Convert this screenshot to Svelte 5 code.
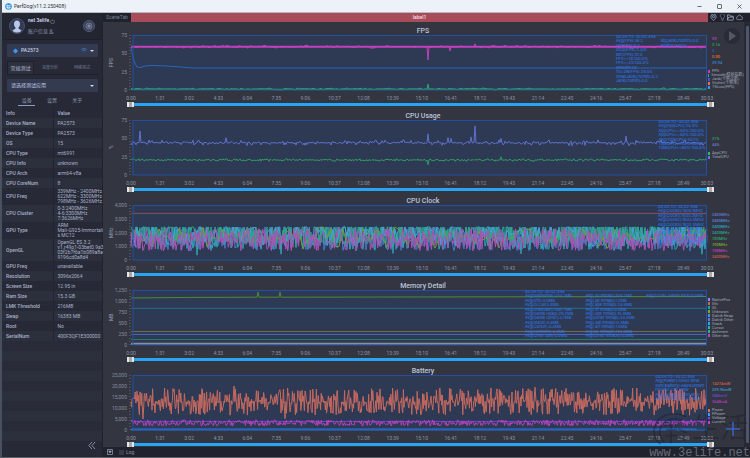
<script>
  let seed = 11;
  const rand = () => {
    seed = (seed * 16807) % 2147483647;
    return seed / 2147483647;
  };

  const W = 576;
  const H = 55;

  // base value with random noise; spikes are [x, value] pairs
  function noise(max, base, amp, { step = 1, spikes = [], pull = 1, cap = max } = {}) {
    let points = [];
    for (let x = 0; x <= W; x += step) {
      const r = rand() * 2 - 1;
      const v = base + Math.sign(r) * Math.pow(Math.abs(r), pull) * amp;
      points.push([x, Math.min(v, cap)]);
    }
    for (const [x, v] of spikes) {
      points = points.filter((p) => Math.abs(p[0] - x) > 1);
      points.push([x - 1, base], [x, v], [x + 1, base]);
    }
    points.sort((a, b) => a[0] - b[0]);
    return points.map(([x, v]) => `${x},${(H - (v / max) * H).toFixed(1)}`).join(' ');
  }

  const flat = (max, v) => `0,${(H - (v / max) * H).toFixed(1)} ${W},${(H - (v / max) * H).toFixed(1)}`;

  const span = '00:06:112-30:02:468';
  const times = [];
  for (let s = 0; s <= 1729; s += 91) {
    times.push(Math.floor(s / 60) + ':' + String(s % 60).padStart(2, '0'));
  }
  times.push('30:03');

  const charts = [
    {
      title: 'FPS',
      unit: 'FPS',
      ticks: ['75', '50', '25', '0'],
      lines: [
        { color: '#2867bd', width: 1, points: '0,13 3,26 6,32 10,32.5 14,31 20,30.4 36,31 50,32 62,33 576,33' },
        { color: '#c23fbd', width: 2, points: flat(75, 59) },
        { color: '#c23fbd', width: 1, points: noise(75, 59, 2, { step: 2, pull: 3, spikes: [[297, 41], [319, 53], [344, 63]] }) },
        { color: '#2fa568', width: 1, points: flat(75, 1) },
        { color: '#2fa568', width: 1, points: noise(75, 1.4, 1.6, { step: 2, pull: 3, spikes: [[297, 8]] }) }
      ],
      stats: [
        {
          left: 84.2,
          rows: [span, 'Avg(FPS):59.2', 'Var(FPS):0.3', 'Drop(FPS):2.0/h', 'Min(FPS):41.0', 'FPS>=18:100.0%', 'FPS>=25:100.0%', 'Smooth:1.8', '1%Low(FPS):29.94', 'SmallJank(/10min):0.3', 'Jank(/10min):0.0']
        },
        { left: 92, rows: ['', 'BigJank(/10min):0.0', 'Stutter:0.00%'] }
      ],
      values: [['59', '#b83fc0'], ['2.16', '#2fa568'], ['0', '#4b4fe0'], ['0.00', '#e8702c'], ['29.94', '#2f86d8']],
      legend: [['FPS', '#c23fbd'], ['Smooth(稳帧指数)', '#35b46c'], ['Jank(卡顿次数)', '#4b4fe0'], ['Stutter(卡顿率)', '#f0702c'], ['1%Low(FPS)', '#35a0f0']]
    },
    {
      title: 'CPU Usage',
      unit: '%',
      ticks: ['75', '50', '25', '0'],
      lines: [
        { color: '#5f70cc', width: 1, points: noise(75, 44, 4, { pull: 3, spikes: [[9, 60], [95, 51], [297, 56], [317, 51], [320, 50], [340, 52], [344, 67], [370, 50], [495, 53]] }) },
        { color: '#2f9a68', width: 1, points: noise(75, 20.5, 1.8, { pull: 2, spikes: [[297, 14], [370, 25]] }) }
      ],
      stats: [
        { left: 91.6, rows: [span, 'Avg(AppCPU):20.4%', 'AppCPU<=60%:100.0%', 'AppCPU<=80%:100.0%', 'Avg(TotalCPU):44.1%', 'TotalCPU<=60%:99.9%', 'TotalCPU<=80%:100.0%'] }
      ],
      values: [['21%', '#2fa568'], ['44%', '#6876d6']],
      legend: [['AppCPU', '#35b46c'], ['TotalCPU', '#6876e6']]
    },
    {
      title: 'CPU Clock',
      unit: 'MHz',
      ticks: ['4,000', '3,000', '2,000', '1,000', '0'],
      lines: [
        { color: '#8a4f60', width: 1, points: flat(4000, 3390) },
        { color: '#4b78cf', width: 1, points: noise(4000, 1600, 950, { cap: 2400 }) },
        { color: '#2fa5b0', width: 1, points: noise(4000, 1700, 950, { pull: 0.8, cap: 2400, spikes: [[66, 350], [150, 420], [262, 480], [390, 450], [571, 420]] }) },
        { color: '#2fa58a', width: 1, points: noise(4000, 1900, 700, { step: 0.8, pull: 0.6, cap: 2400 }) },
        { color: '#7a9c30', width: 1, points: noise(4000, 1600, 800, { step: 4, pull: 2 }) },
        { color: '#4b9fd8', width: 1, points: noise(4000, 1800, 800, { step: 2, cap: 2400 }) },
        { color: '#ac52b4', width: 1, points: noise(4000, 1480, 820, { step: 0.9 }) }
      ],
      stats: [
        { left: 91.5, rows: [span, 'Avg(Clock0):1936.1MHz', 'Avg(Clock1):1935.2MHz', 'Avg(Clock2):1933.4MHz', 'Avg(Clock3):1932.4MHz', 'Avg(Clock4):1286.5MHz', 'Avg(Clock5):1286.4MHz', 'Avg(Clock6):1286.1MHz', 'Avg(Clock7):3399.8MHz'] }
      ],
      values: [['2400MHz', '#6876d6'], ['2400MHz', '#4b8ce0'], ['2400MHz', '#2fa5c8'], ['2400MHz', '#2fa58a'], ['700MHz', '#2fa568'], ['700MHz', '#7ab020'], ['700MHz', '#c23fbd'], ['3400MHz', '#c9594f']],
      legend: []
    },
    {
      title: 'Memory Detail',
      unit: 'MB',
      ticks: ['1,250', '1,000', '750', '500', '250', '0'],
      lines: [
        { color: '#4c8a35', width: 1, points: '0,8 60,7.4 126,7.2 127,2 128,7.2 148,7.2 149,2 150,7.2 576,6.5' },
        { color: '#1f7290', width: 1, points: flat(1250, 835) },
        { color: '#7a6744', width: 1, points: flat(1250, 306) },
        { color: '#4f66b8', width: 1, points: flat(1250, 240) },
        { color: '#2b7a64', width: 1, points: flat(1250, 125) },
        { color: '#8790a0', width: 2, points: flat(1250, 30) }
      ],
      stats: [
        {
          left: 68.4,
          rows: [span, 'Avg(NativePss):240.7MB', 'Avg(Gfx):0.0MB', 'Avg(GL):843.4MB', 'Avg(Unknown):1097.7MB', 'Avg(Dalvik Heap):29.2MB', 'Avg(Dalvik Other):3.7MB', 'Avg(Stack):6.8MB', 'Avg(Cursor):0.0MB', 'Avg(Ashmem):0.0MB', 'Avg(Other dev):0.0MB']
        },
        {
          left: 78.9,
          rows: ['', 'Avg(.so mmap):304.7MB', 'Avg(.jar mmap):1.2MB', 'Avg(.apk mmap):28.9MB', 'Avg(.ttf mmap):0.0MB', 'Avg(.dex mmap):15.0MB', 'Avg(Other mmap):34.2MB', 'Avg(.oat mmap):0.4MB', 'Avg(.art mmap):1.6MB', 'Avg(GL mtrack):123.0MB', 'Avg(Other mtrack):0.0MB']
        },
        { left: 89.4, rows: ['', 'Avg(TOTAL SWAP PSS):0.0MB'] }
      ],
      values: [],
      legend: [['NativePss', '#8d8ff0'], ['Gfx', '#d8604f'], ['GL', '#16a5a0'], ['Unknown', '#7ab020'], ['Dalvik Heap', '#4b8cf0'], ['Dalvik Other', '#6876d6'], ['Stack', '#2fa5f0'], ['Cursor', '#2fb59a'], ['Ashmem', '#35b46c'], ['Other dev', '#c23fbd']]
    },
    {
      title: 'Battery',
      unit: '',
      ticks: ['25,000', '20,000', '15,000', '10,000', '5,000', '0'],
      lines: [
        { color: '#c5695f', width: 1, points: noise(25000, 12900, 6200, { step: 0.6, pull: 1.5, spikes: [[12, 5000], [103, 20000], [154, 5200], [404, 19500]] }) },
        { color: '#6b46d0', width: 1, points: flat(25000, 3900) },
        { color: '#b541bd', width: 1, points: noise(25000, 3200, 1400, { step: 0.8 }) },
        { color: '#2a78d8', width: 2, points: flat(25000, 230) }
      ],
      stats: [
        { left: 91, rows: [span, 'Avg(Power):13652.1mW', 'Sum(Battery):6809.0mWh', 'FPower:230.6mW', 'Avg(Voltage):3861.9mV', 'Avg(Current):3532.0mA'] }
      ],
      values: [['14274mW', '#d8604f'], ['229.96mW', '#3f96d8'], ['3886mV', '#6b46d0'], ['3640mA', '#b541bd']],
      legend: [['Power', '#e86a55'], ['FPower', '#35a0f0'], ['Voltage', '#6b46e0'], ['Current', '#c23fbd']]
    }
  ];

  const info = [
    ['Device Name', 'PA2573'],
    ['Device Type', 'PA2573'],
    ['OS', '15'],
    ['CPU Type', 'mt6991'],
    ['CPU Info', 'unknown'],
    ['CPU Arch', 'arm64-v8a'],
    ['CPU CoreNum', '8'],
    ['CPU Freq', '339MHz - 2400MHz\n622MHz - 3300MHz\n798MHz - 3626MHz'],
    ['CPU Cluster', '0-3:2400MHz\n4-6:3300MHz\n7:3626MHz'],
    ['GPU Type', 'ARM\nMali-G925-Immortali\ns MC12'],
    ['OpenGL', 'OpenGL ES 3.2\nv1.r49p1-03bet0.9a3\n03f2b7f6a1b089a8ec\n9196cd0a8d4'],
    ['GPU Freq', 'unavailable'],
    ['Resolution', '3096x2064'],
    ['Screen Size', '12.95 in'],
    ['Ram Size', '15.3 GB'],
    ['LMK Threshold', '216MB'],
    ['Swap', '16383 MB'],
    ['Root', 'No'],
    ['SerialNum', '400F3QF1E300000']
  ];
</script>

<div class="window">
  <header class="titlebar">
    <svg class="logo" viewBox="0 0 16 16">
      <circle cx="8" cy="8" r="7.5" fill="#1f8ad6" />
      <path d="M4 3l3 2h3l3-2-1 5 1 3-4 3-5-2-1-4z" fill="#d9efff" />
      <path d="M6 7h2v2H6zM10 7h1v2h-1zM7 11h3v1H7z" fill="#1763a5" />
    </svg>
    <span>PerfDog(v11.2.250408)</span>
    <div class="controls">
      <button aria-label="Minimize"><svg viewBox="0 0 10 10"><path d="M1 5h8" /></svg></button>
      <button aria-label="Maximize"><svg viewBox="0 0 10 10"><rect x="1" y="1" width="8" height="8" rx="1" /></svg></button>
      <button aria-label="Close"><svg viewBox="0 0 10 10"><path d="M1 1l8 8M9 1l-8 8" /></svg></button>
    </div>
  </header>

  <div class="body">
    <aside>
      <div class="profile">
        <svg class="avatar" viewBox="0 0 32 32">
          <circle cx="16" cy="16" r="15" fill="#343c55" stroke="#48506c" stroke-width="2" />
          <path d="M16 5c-4 0-6 3-6 7 0 3 1 5 3 7v2l-6 4c2 3 5 4 9 4s7-1 9-4l-6-4v-2c2-2 3-4 3-7 0-4-2-7-6-7z" fill="#bac7e8" />
        </svg>
        <div class="who">
          <strong>net 3elife <svg class="tiny" viewBox="0 0 10 10"><path d="M3 2a4 4 0 1 0 4 0M5 1v3" /></svg></strong>
          <span>账户信息 <svg class="tiny" viewBox="0 0 10 10"><circle cx="4" cy="3" r="2" /><path d="M1 9c0-4 6-4 6 0zM8 6v3" /></svg></span>
        </div>
        <button class="target" aria-label="Record">
          <svg viewBox="0 0 24 24">
            <circle cx="12" cy="12" r="11" fill="#3a4056" stroke="#545b76" stroke-width="2" />
            <circle cx="12" cy="12" r="6" fill="none" stroke="#808aa8" stroke-width="1.5" />
            <path d="M9 9h6v6H9z" fill="#808aa8" />
          </svg>
        </button>
      </div>

      <div class="picker device">
        <svg class="gem" viewBox="0 0 12 12"><path d="M6 0l5 4v4l-5 4-5-4V4z" fill="#3f93f5" /></svg>
        <select aria-label="Device"><option>PA2573</option></select>
        <svg class="wifi" viewBox="0 0 16 12"><path d="M1 4c4-4 10-4 14 0M4 7c2-2 6-2 8 0M8 10v1" /></svg>
        <i class="caret"></i>
      </div>

      <nav class="modes">
        <button class="active">常规测试</button>
        <button>深度分析</button>
        <button>网络测试</button>
      </nav>

      <div class="picker app">
        <select aria-label="App"><option>请选择测试应用</option></select>
        <i class="caret"></i>
      </div>

      <nav class="tabs">
        <button class="active">设备</button>
        <button>设置</button>
        <button>关于</button>
      </nav>

      <table>
        <thead>
          <tr><th>Info</th><th>Value</th></tr>
        </thead>
        <tbody>
          {#each info as [key, value]}
            <tr class:tall={value.split('\n').length === 3} class:taller={value.split('\n').length === 4}>
              <td>{key}</td>
              <td>{value}</td>
            </tr>
          {/each}
        </tbody>
      </table>
      <div class="filler"></div>
      <button class="collapse" aria-label="Collapse">
        <svg viewBox="0 0 18 18"><path d="M9 1L2 9l7 8M16 1L9 9l7 8" /></svg>
      </button>
    </aside>

    <main>
      <div class="scenes">
        <span class="scenetab">SceneTab</span>
        <span class="label">label1</span>
        <div class="tools">
          <button aria-label="Location"><svg viewBox="0 0 16 16"><path d="M8 15C4 11 2 9 2 6a6 6 0 0 1 12 0c0 3-2 5-6 9z" /><circle cx="8" cy="6" r="2.5" /></svg></button>
          <button aria-label="Hint"><svg class="dim" viewBox="0 0 16 16"><path d="M6 12V9a5 5 0 1 1 4 0v3zM6 15h4" /></svg></button>
          <button aria-label="Open"><svg viewBox="0 0 16 16"><path d="M1 14V2h5l2 3h6v2M1 14l3-7h11l-1 7z" /></svg></button>
          <button aria-label="Cloud"><svg viewBox="0 0 20 16"><path d="M5 14a4 4 0 0 1 0-8 5 5 0 0 1 10 0 4 4 0 0 1 0 8z" /></svg></button>
        </div>
      </div>

      <div class="scroll">
        <div class="charts">
          {#each charts as chart}
            <section class="chart">
              <h2>{chart.title}</h2>
              <div class="axis">
                <span class="unit">{chart.unit}</span>
                <div class="ticks">
                  {#each chart.ticks as tick}<span>{tick}</span>{/each}
                </div>
                <i class="ruler"></i>
              </div>
              <div class="plot">
                <svg viewBox="0 0 {W} {H}" preserveAspectRatio="none">
                  <rect x="2" y="0.5" width="573.5" height="54.5" fill="#2e3a54" />
                  {#each chart.lines as line}
                    <polyline points={line.points} stroke={line.color} stroke-width={line.width} />
                  {/each}
                  <rect x="2" y="0.5" width="573.5" height="54.5" fill="none" stroke="#2350a0" />
                </svg>
                {#each chart.stats as col}
                  <div class="stats" style="left: {col.left}%">
                    {#each col.rows as row}<span>{row}</span>{/each}
                  </div>
                {/each}
              </div>
              <div class="side" class:low={chart.legend.length === 0}>
                {#if chart.values.length}
                  <div class="values">
                    {#each chart.values as [text, color]}<span style="color: {color}">{text}</span>{/each}
                  </div>
                {/if}
                {#if chart.legend.length}
                  <ul>
                    {#each chart.legend as [text, color]}
                      <li><i style="background: {color}"></i>{text}</li>
                    {/each}
                  </ul>
                {/if}
              </div>
              <div class="times">
                {#each times as time}<span>{time}</span>{/each}
              </div>
              <div class="range">
                <input type="range" min="0" max="1803" value="0" aria-label="{chart.title} start" />
                <input type="range" min="0" max="1803" value="1803" aria-label="{chart.title} end" />
              </div>
            </section>
          {/each}
        </div>
        <div class="scrollbar"><i></i></div>
        <button class="play" aria-label="Play"><svg viewBox="0 0 16 16"><path d="M5 3l7 5-7 5z" /></svg></button>
        <div class="mark">
          <svg viewBox="0 0 44 36">
            <path d="M38 5C22-3 5 5 4 20c0 6 3 11 7 14M34 9C22 4 11 10 10 21c0 5 2 8 5 11M15 14h14M17 19h11M22 9v24M16 25h13M29 10l9 4M30 18l9 4M29 26l9 4" />
          </svg>
          <span>生活</span>
        </div>
        <button class="add" aria-label="Add"><svg viewBox="0 0 14 14"><path d="M7 0v14M0 7h14" /></svg></button>
      </div>

      <footer>
        <button class="dropbox" aria-label="Expand"><svg viewBox="0 0 14 14"><rect x="1" y="1" width="12" height="12" rx="1" /><path d="M4 5h6L7 9z" fill="#c4cbdd" /></svg></button>
        <label><input type="checkbox" />Log</label>
        <span class="site">www.3elife.net</span>
      </footer>
    </main>
  </div>
</div>

<style>
  :global(body) {
    margin: 0;
    background: #2b2e3a;
  }
  .window {
    display: flex;
    flex-direction: column;
    min-height: 100vh;
    box-sizing: border-box;
    border-left: 2px solid #49515e;
    border-bottom: 1px solid #5a5f68;
    font-family: Roboto, 'Noto Sans CJK SC', sans-serif;
    font-size: 5px;
    line-height: 5px;
    color: #a9b1c9;
    overflow: hidden;
  }
  button,
  select {
    font: inherit;
    color: inherit;
    background: none;
    border: none;
    padding: 0;
    margin: 0;
  }
  svg {
    display: block;
    fill: none;
  }

  .titlebar {
    display: flex;
    align-items: center;
    height: 13px;
    box-sizing: border-box;
    padding: 0 5px 0 3px;
    gap: 2px;
    background: #edf2f8;
    border-bottom: 1px solid #b4bac4;
    color: #2c3038;
  }
  .logo {
    width: 7px;
    height: 7px;
  }
  .controls {
    display: flex;
    gap: 14px;
    margin-left: auto;
    padding-right: 2px;
  }
  .controls svg {
    width: 5px;
    height: 5px;
    stroke: #30343c;
    stroke-width: 1.4;
  }
  .controls button {
    width: 6px;
  }

  .body {
    display: flex;
    flex: 1;
  }
  aside {
    display: flex;
    flex-direction: column;
    width: 101px;
    flex: none;
    background: #272a36;
    border-right: 1px solid #20222c;
    box-sizing: border-box;
  }
  .profile {
    display: flex;
    align-items: center;
    gap: 3px;
    height: 27px;
    padding: 0 7px;
    background: #232631;
    border-bottom: 1px solid #1c1f28;
    box-sizing: border-box;
  }
  .avatar {
    width: 16px;
    height: 16px;
  }
  .who {
    display: flex;
    flex-direction: column;
    gap: 5px;
    flex: 1;
  }
  .who strong {
    font-size: 5px;
    font-weight: 700;
    color: #c4cbe0;
  }
  .who span {
    color: #8d96b0;
  }
  .tiny {
    display: inline-block;
    width: 5px;
    height: 5px;
    stroke: #9aa5c4;
    vertical-align: middle;
  }
  .target svg {
    width: 12px;
    height: 12px;
  }

  .picker {
    display: flex;
    align-items: center;
    gap: 3px;
    height: 13px;
    margin: 4px 4px 0 5px;
    padding: 0 4px;
    background: #343b51;
    border-radius: 1px;
    box-sizing: border-box;
    color: #c4cbe0;
  }
  .picker select {
    flex: 1;
    min-width: 0;
    appearance: none;
  }
  .device {
    padding-left: 6px;
    font-weight: 500;
  }
  .gem {
    width: 5px;
    height: 6px;
  }
  .wifi {
    width: 6px;
    height: 5px;
    stroke: #3f83e5;
    stroke-width: 2;
  }
  .caret {
    border: 2px solid transparent;
    border-top-color: #d4daea;
    border-bottom: none;
  }
  .modes {
    display: flex;
    height: 14px;
    margin: 4px 4px 0 5px;
    border-bottom: 1px solid #1e212b;
    box-sizing: border-box;
    color: #6f7891;
    font-size: 4px;
  }
  .modes button {
    flex: 1;
  }
  .modes .active {
    flex: none;
    width: 27px;
    background: #2d303d;
    border: 1px solid #1e212b;
    border-bottom: none;
    color: #b3bcd4;
    font-size: 5px;
  }
  .tabs {
    display: flex;
    gap: 8px;
    padding: 5px 16px 0;
    margin-bottom: 2px;
    color: #8d96b0;
  }
  .tabs button {
    width: 18px;
    padding: 1px 0 2px;
    border-bottom: 1px solid transparent;
  }
  .tabs .active {
    border-bottom-color: #8f9ac8;
  }

  table {
    width: 100%;
    border-collapse: collapse;
    table-layout: fixed;
  }
  th,
  td {
    height: 10px;
    padding: 0 0 0 4px;
    text-align: left;
    font-weight: 500;
    white-space: pre;
    box-sizing: border-box;
  }
  th:first-child,
  td:first-child {
    width: 51px;
    border-right: 1px solid #22252f;
  }
  td:last-child {
    font-weight: 400;
  }
  tbody tr:nth-child(odd) {
    background: #2c2f3c;
  }
  .tall td {
    height: 17px;
  }
  .taller td {
    height: 22px;
  }
  .filler {
    flex: 1;
    background: repeating-linear-gradient(#292c38 0 10px, #2c2f3c 10px 20px);
  }
  .collapse {
    align-self: flex-end;
    padding: 0 6px 7px 0;
  }
  .collapse svg {
    width: 8px;
    height: 9px;
    stroke: #98a2c2;
    stroke-width: 1.8;
  }

  main {
    display: flex;
    flex-direction: column;
    flex: 1;
    min-width: 0;
    background: #333641;
  }
  .scenes {
    display: grid;
    grid-template-columns: 28px 1fr 42px;
    align-items: stretch;
    height: 9px;
    line-height: 9px;
    text-align: center;
    background: #20232e;
  }
  .scenetab {
    color: #767e94;
  }
  .label {
    background: #a94c5a;
    color: #f0dfe2;
    font-weight: 500;
  }
  .tools {
    display: flex;
    align-items: center;
    justify-content: space-between;
    padding: 0 7px 0 2px;
  }
  .tools svg {
    width: 7px;
    height: 7px;
    stroke: #b2bad0;
    stroke-width: 1.6;
  }
  .tools .dim {
    stroke: #767e94;
  }

  .scroll {
    position: relative;
    display: flex;
    flex: 1;
  }
  .charts {
    display: flex;
    flex-direction: column;
    gap: 4px;
    flex: 1;
    min-width: 0;
    padding-top: 4px;
  }
  .chart {
    display: grid;
    grid-template-columns: 28px 1fr 37px;
    grid-template-rows: 9px 55px 12px 5px;
  }
  h2 {
    grid-column: 2;
    margin: 0 0 0 8px;
    font-size: 7px;
    line-height: 11px;
    font-weight: 500;
    text-align: center;
    color: #bcc4da;
  }
  .axis {
    grid-column: 1;
    display: flex;
    justify-content: space-between;
    gap: 1px;
    color: #858c9f;
  }
  .unit {
    writing-mode: vertical-rl;
    transform: rotate(180deg);
    text-align: center;
    width: 5px;
    margin-left: 6px;
    font-weight: 500;
  }
  .ticks {
    display: flex;
    flex: 1;
    flex-direction: column;
    justify-content: space-between;
    align-items: flex-end;
    margin: -2px 0 -3px -4px;
  }
  .ruler {
    width: 2px;
    margin-left: 1px;
    background: repeating-linear-gradient(#4c505e 0 1px, transparent 1px 3px);
  }
  .plot {
    position: relative;
    min-width: 0;
  }
  .plot svg {
    width: 100%;
    height: 100%;
    overflow: visible;
  }
  .stats {
    position: absolute;
    top: 0;
    display: grid;
    grid-template-rows: repeat(12, 1fr);
    height: 53px;
    font-family: Inter, Roboto, sans-serif;
    font-size: 4px;
    line-height: 4px;
    white-space: nowrap;
    color: #2e7df2;
  }
  .side {
    display: flex;
    flex-direction: column;
    gap: 3px;
    align-self: center;
    font-size: 4px;
    line-height: 4px;
    white-space: nowrap;
  }
  .side.low {
    align-self: end;
  }
  .values {
    display: flex;
    flex-direction: column;
    padding-left: 5px;
    line-height: 6px;
    font-weight: 500;
  }
  ul {
    list-style: none;
    margin: 0;
    padding: 0;
    color: #a0a7ba;
  }
  li {
    display: flex;
    align-items: center;
    gap: 2px;
    height: 4px;
    padding-left: 1px;
  }
  li i {
    width: 2px;
    height: 3px;
  }
  .times {
    grid-column: 2;
    display: grid;
    grid-template-columns: repeat(19, 91fr) 74fr 0;
    align-items: end;
    height: 11px;
    color: #8b92a5;
  }
  .times span {
    display: flex;
    justify-content: center;
    width: 0;
  }
  .range {
    grid-column: 2;
    position: relative;
    height: 5px;
    margin: 0 -7px 0 -4px;
    background: linear-gradient(transparent 1px, #27a5f3 1px 4px, transparent 4px);
  }
  .range input {
    position: absolute;
    inset: 0;
    width: 100%;
    height: 5px;
    margin: 0;
    appearance: none;
    background: none;
    pointer-events: none;
  }
  .range input::-webkit-slider-thumb {
    appearance: none;
    pointer-events: auto;
    width: 7px;
    height: 5px;
    background: linear-gradient(90deg, #e6e6e6 2px, #a8a8a8 2px 5px, #e6e6e6 5px);
  }

  .scrollbar {
    display: flex;
    justify-content: center;
    width: 6px;
    padding: 4px 0;
    box-sizing: border-box;
    background: #272a35;
  }
  .scrollbar i {
    width: 3px;
    background: #50566a;
    border-radius: 1px;
  }
  .play {
    position: absolute;
    top: 6px;
    right: 10px;
    width: 16px;
    height: 16px;
    border-radius: 50%;
    background: #292c36;
  }
  .play svg {
    fill: #535866;
  }
  .add {
    position: absolute;
    right: 10px;
    bottom: 11px;
  }
  .add svg {
    width: 14px;
    height: 14px;
    stroke: #3c62c4;
    stroke-width: 1.6;
  }
  .mark {
    position: absolute;
    right: 2px;
    bottom: 1px;
    display: flex;
    align-items: center;
    color: #191b22;
    opacity: 0.35;
    font-size: 28px;
    line-height: 34px;
    pointer-events: none;
  }
  .mark svg {
    width: 42px;
    height: 34px;
    stroke: #191b22;
    stroke-width: 2;
  }

  footer {
    display: flex;
    align-items: center;
    gap: 6px;
    height: 10px;
    padding-left: 4px;
    background: #20232d;
    color: #8b92a5;
  }
  .dropbox svg {
    width: 6px;
    height: 6px;
    stroke: #aab2c8;
    stroke-width: 1.6;
  }
  footer label {
    display: flex;
    align-items: center;
    gap: 2px;
  }
  footer input {
    appearance: none;
    width: 5px;
    height: 5px;
    margin: 0;
    background: #363a4b;
  }
  .site {
    margin-left: auto;
    padding-top: 2px;
    font-family: 'Liberation Mono', monospace;
    font-size: 12px;
    line-height: 10px;
    color: #666b78;
  }
</style>
